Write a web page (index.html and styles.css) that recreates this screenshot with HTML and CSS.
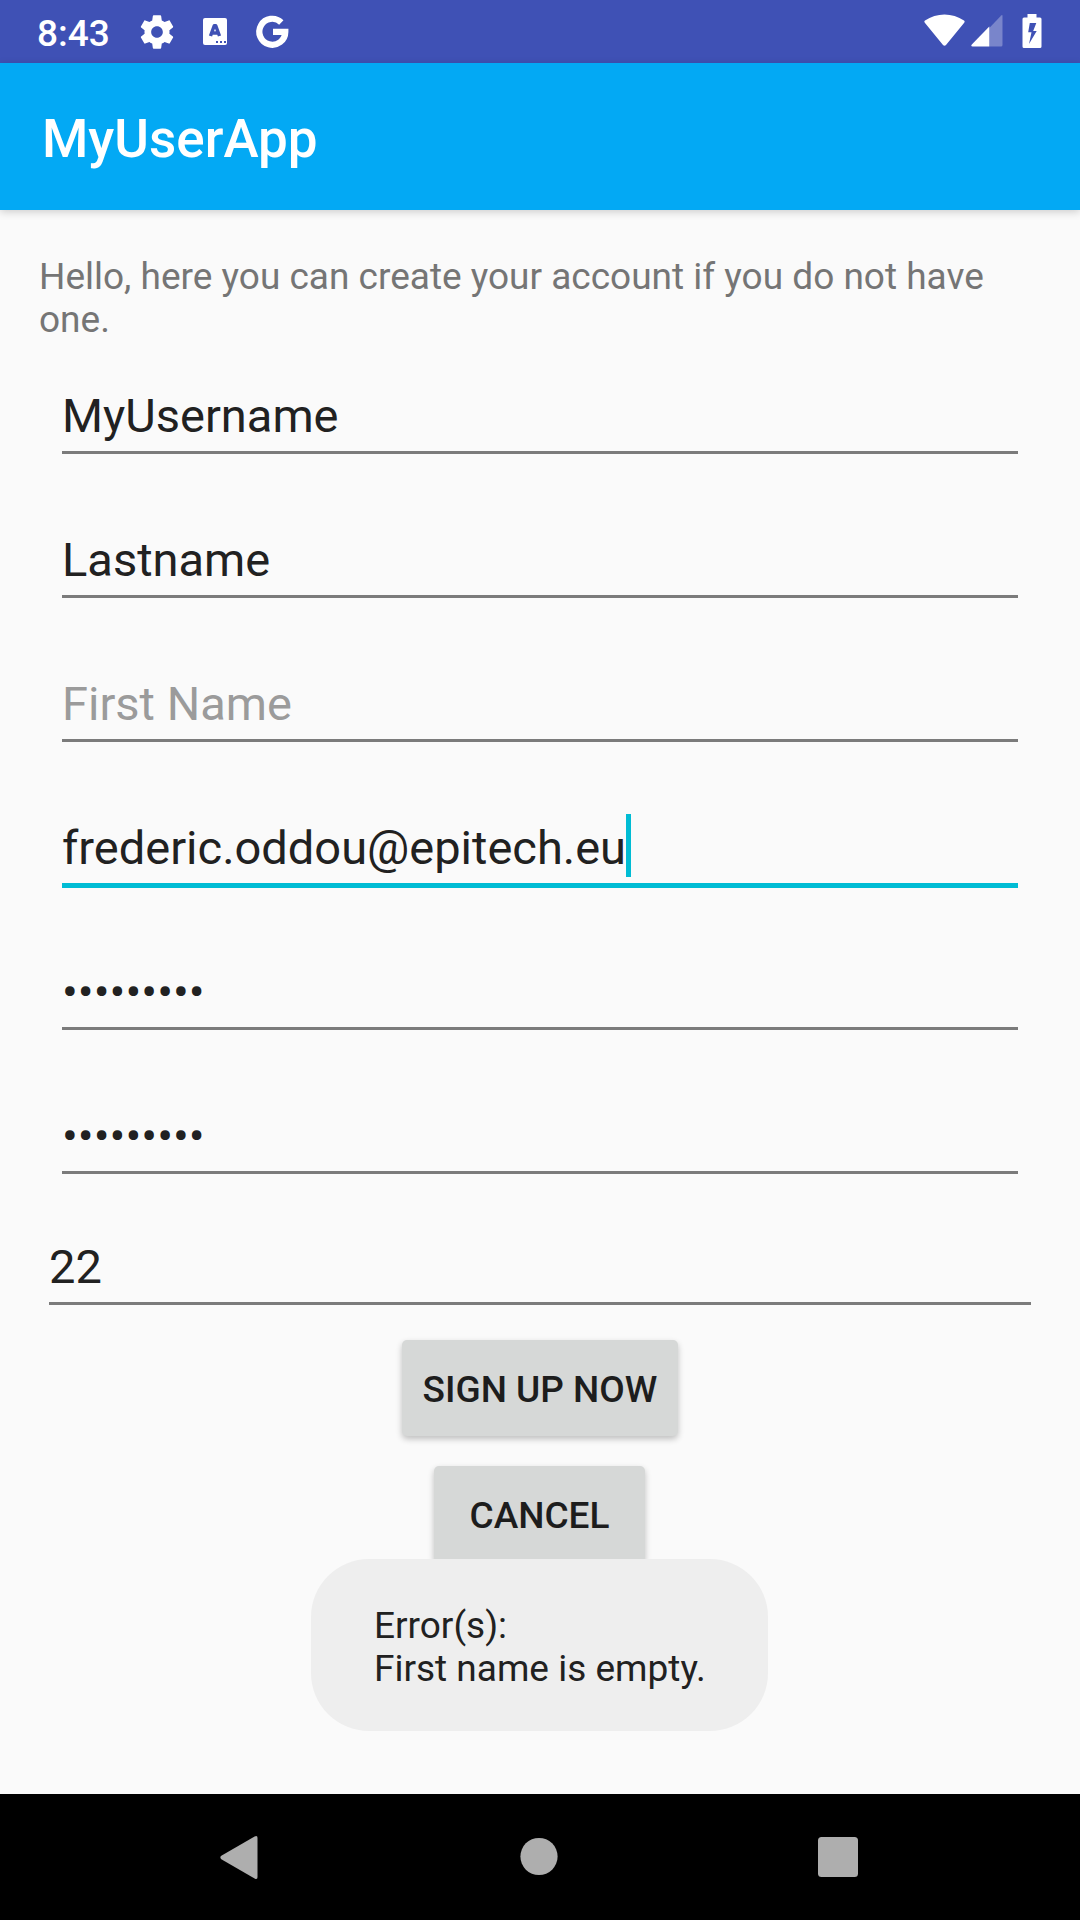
FILE: index.html
```html
<!DOCTYPE html>
<html lang="en">
<head>
<meta charset="utf-8">
<title>MyUserApp</title>
<link rel="stylesheet" href="styles.css">
</head>
<body>
<div class="screen">
  <header class="status">
    <span class="clock">8:43</span>
    <svg class="gear" width="40" height="40" viewBox="0 0 24 24"><path d="M19.43 12.98c.04-.32.07-.64.07-.98s-.03-.66-.07-.98l2.11-1.65c.19-.15.24-.42.12-.64l-2-3.46c-.12-.22-.39-.3-.61-.22l-2.49 1c-.52-.4-1.08-.73-1.69-.98l-.38-2.65C14.46 2.18 14.25 2 14 2h-4c-.25 0-.46.18-.49.42l-.38 2.65c-.61.25-1.17.59-1.69.98l-2.49-1c-.23-.09-.49 0-.61.22l-2 3.46c-.13.22-.07.49.12.64l2.11 1.65c-.04.32-.07.65-.07.98s.03.66.07.98l-2.11 1.65c-.19.15-.24.42-.12.64l2 3.46c.12.22.39.3.61.22l2.49-1c.52.4 1.08.73 1.69.98l.38 2.65c.03.24.24.42.49.42h4c.25 0 .46-.18.49-.42l.38-2.65c.61-.25 1.17-.59 1.69-.98l2.49 1c.23.09.49 0 .61-.22l2-3.46c.12-.22.07-.49-.12-.64l-2.11-1.65zM12 15.5c-1.93 0-3.5-1.57-3.5-3.5s1.57-3.5 3.5-3.5 3.5 1.57 3.5 3.5-1.57 3.5-3.5 3.5z"/></svg>
    <svg class="keyboard" width="24" height="27" viewBox="0 0 24 27"><rect width="24" height="27" rx="2"/><path class="cut-line" d="M7.500 18 11.300 7.700h1.400L16.500 18M9 15h6"/><path class="cut" d="M13 23h2v2h-2zM17 23h2v2h-2zM21 23h2v2h-2z"/></svg>
    <svg class="google" width="33" height="34" viewBox="0 0 33 34"><path class="ring" d="M25.300 7.400A13 13 0 1 0 29.300 16.900H17"/></svg>
    <span class="spacer"></span>
    <svg class="wifi" width="41" height="33" viewBox="0 0 41 33"><path d="M.8 8.7C.1 7.9.2 7.1 1 6.5 12.600-1.600 28.400-1.600 40 6.500c.8.600.9 1.400.2 2.200L22 31c-.9 1.100-2.100 1.100-3 0z"/></svg>
    <svg class="signal" width="32" height="32" viewBox="0 0 32 32"><path class="dim" d="M18.300 13 30.200.500Q31.500-.5 31.500 1V30q0 1.500-1.500 1.500H18.300z"/><path d="M18.300 11.500V31.500H1.500Q-.5 31.300.8 29.500z"/></svg>
    <svg class="battery" width="20" height="34" viewBox="0 0 20 34"><path fill-rule="evenodd" d="M5.500 0h9v3.500H18q1.500 0 1.500 1.500v27.500q0 1.500-1.500 1.500H2Q.5 34 .5 32.500V5Q.5 3.500 2 3.500h3.500zM7.800 9 6.200 18.200H9.500L7 30 14.700 17H11.200L14.300 9z"/></svg>
  </header>
  <div class="appbar"><h1>MyUserApp</h1></div>
  <main class="content">
    <p class="intro">Hello, here you can create your account if you do not have one.</p>
    <div class="fields">
      <div class="field"><span class="value">MyUsername</span></div>
      <div class="field"><span class="value">Lastname</span></div>
      <div class="field"><span class="value hint">First Name</span></div>
      <div class="field focused"><span class="value">frederic.oddou@epitech.eu<i class="cursor"></i></span></div>
      <div class="field"><span class="value">•••••••••</span></div>
      <div class="field"><span class="value">•••••••••</span></div>
    </div>
    <div class="field age"><span class="value">22</span></div>
    <div class="actions">
      <button class="button signup">SIGN UP NOW</button>
      <button class="button cancel">CANCEL</button>
    </div>
  </main>
  <div class="toast">Error(s):<br>First name is empty.</div>
  <nav class="navbar">
    <svg width="38" height="43" viewBox="0 0 38 43"><path d="M34.600.500Q37.500-1 37.500 2V41q0 3-2.900 1.500L1.300 23.200Q-.6 21.500 1.300 19.800z"/></svg>
    <svg width="38" height="38" viewBox="0 0 38 38"><circle cx="20" cy="18.500" r="18.600"/></svg>
    <svg width="40" height="40" viewBox="0 0 40 40"><rect width="40" height="40" rx="3.500"/></svg>
  </nav>
</div>
</body>
</html>
```
FILE: styles.css
```css
* {
  box-sizing: border-box;
}

body {
  margin: 0;
  font-family: Roboto, sans-serif;
  color: #212121;
}

.screen {
  position: relative;
  display: flex;
  flex-direction: column;
  width: 1080px;
  height: 1920px;
  overflow: hidden;
  background: #fafafa;
}

svg {
  display: block;
  flex: none;
  overflow: visible;
}

.status {
  display: flex;
  align-items: flex-start;
  height: 63px;
  padding: 0 38px 0 37px;
  background: #3f51b5;
  color: #fff;
  fill: #fff;
}

.clock {
  width: 74px;
  margin-top: 12px;
  font-size: 37px;
  font-weight: 500;
  line-height: 43px;
  white-space: nowrap;
}

.gear {
  margin: 12px 0 0 26px;
}

.keyboard {
  margin: 18px 0 0 26px;
}

.google {
  margin: 15px 0 0 29px;
}

.cut {
  fill: #3f51b5;
}

.cut-line {
  fill: none;
  stroke: #3f51b5;
  stroke-width: 3.4;
  stroke-linejoin: round;
}

.ring {
  fill: none;
  stroke: #fff;
  stroke-width: 6.2;
}

.spacer {
  flex: 1;
}

.wifi {
  margin-top: 14px;
}

.signal {
  margin: 15px 0 0 6px;
}

.dim {
  opacity: 0.3;
}

.battery {
  margin: 14px 0 0 19px;
}

.appbar {
  display: flex;
  align-items: center;
  height: 147px;
  padding: 4px 42px 0;
  background: #03a9f4;
  color: #fff;
  box-shadow: 0 2px 8px rgba(0, 0, 0, 0.18);
}

h1 {
  margin: 0;
  font-size: 53px;
  font-weight: 500;
  line-height: 62px;
}

.content {
  flex: 1;
  padding: 45px 39px 0;
}

.intro {
  margin: 0 0 47px;
  font-size: 37px;
  line-height: 43px;
  color: #757575;
}

.fields {
  display: flex;
  flex-direction: column;
  gap: 76px;
  padding: 0 23px;
}

.field {
  height: 68px;
}

.field::after {
  content: "";
  display: block;
  height: 3px;
  margin-top: 7px;
  background: #7b7b7b;
}

.focused::after {
  height: 5px;
  background: #00bcd4;
}

.value {
  position: relative;
  display: block;
  width: max-content;
  font-size: 47px;
  line-height: 56px;
}

.hint {
  color: #9b9b9b;
}

.cursor {
  position: absolute;
  top: -6px;
  left: 100%;
  width: 5px;
  height: 63px;
  background: #00bcd4;
}

.age {
  margin: 63px 10px 0;
}

.actions {
  display: flex;
  flex-direction: column;
  align-items: center;
  gap: 30px;
  margin-top: 33px;
}

.button {
  height: 96px;
  padding: 2px 0 0;
  border: 0;
  border-radius: 5px;
  background: #d6d8d7;
  color: #1d1d1d;
  font: 500 37px/43px Roboto, sans-serif;
  box-shadow: 0 3px 6px rgba(0, 0, 0, 0.24);
}

.signup {
  width: 276px;
}

.cancel {
  width: 211px;
  margin-right: 1px;
}

.toast {
  position: absolute;
  left: 311px;
  top: 1559px;
  width: 457px;
  height: 172px;
  padding: 45px 63px;
  border-radius: 58px;
  background: #eee;
  font-size: 37px;
  line-height: 43px;
  white-space: nowrap;
}

.navbar {
  display: flex;
  align-items: center;
  justify-content: space-between;
  height: 126px;
  padding: 0 222px 0 220px;
  background: #000;
  fill: #aeaeae;
}
```
